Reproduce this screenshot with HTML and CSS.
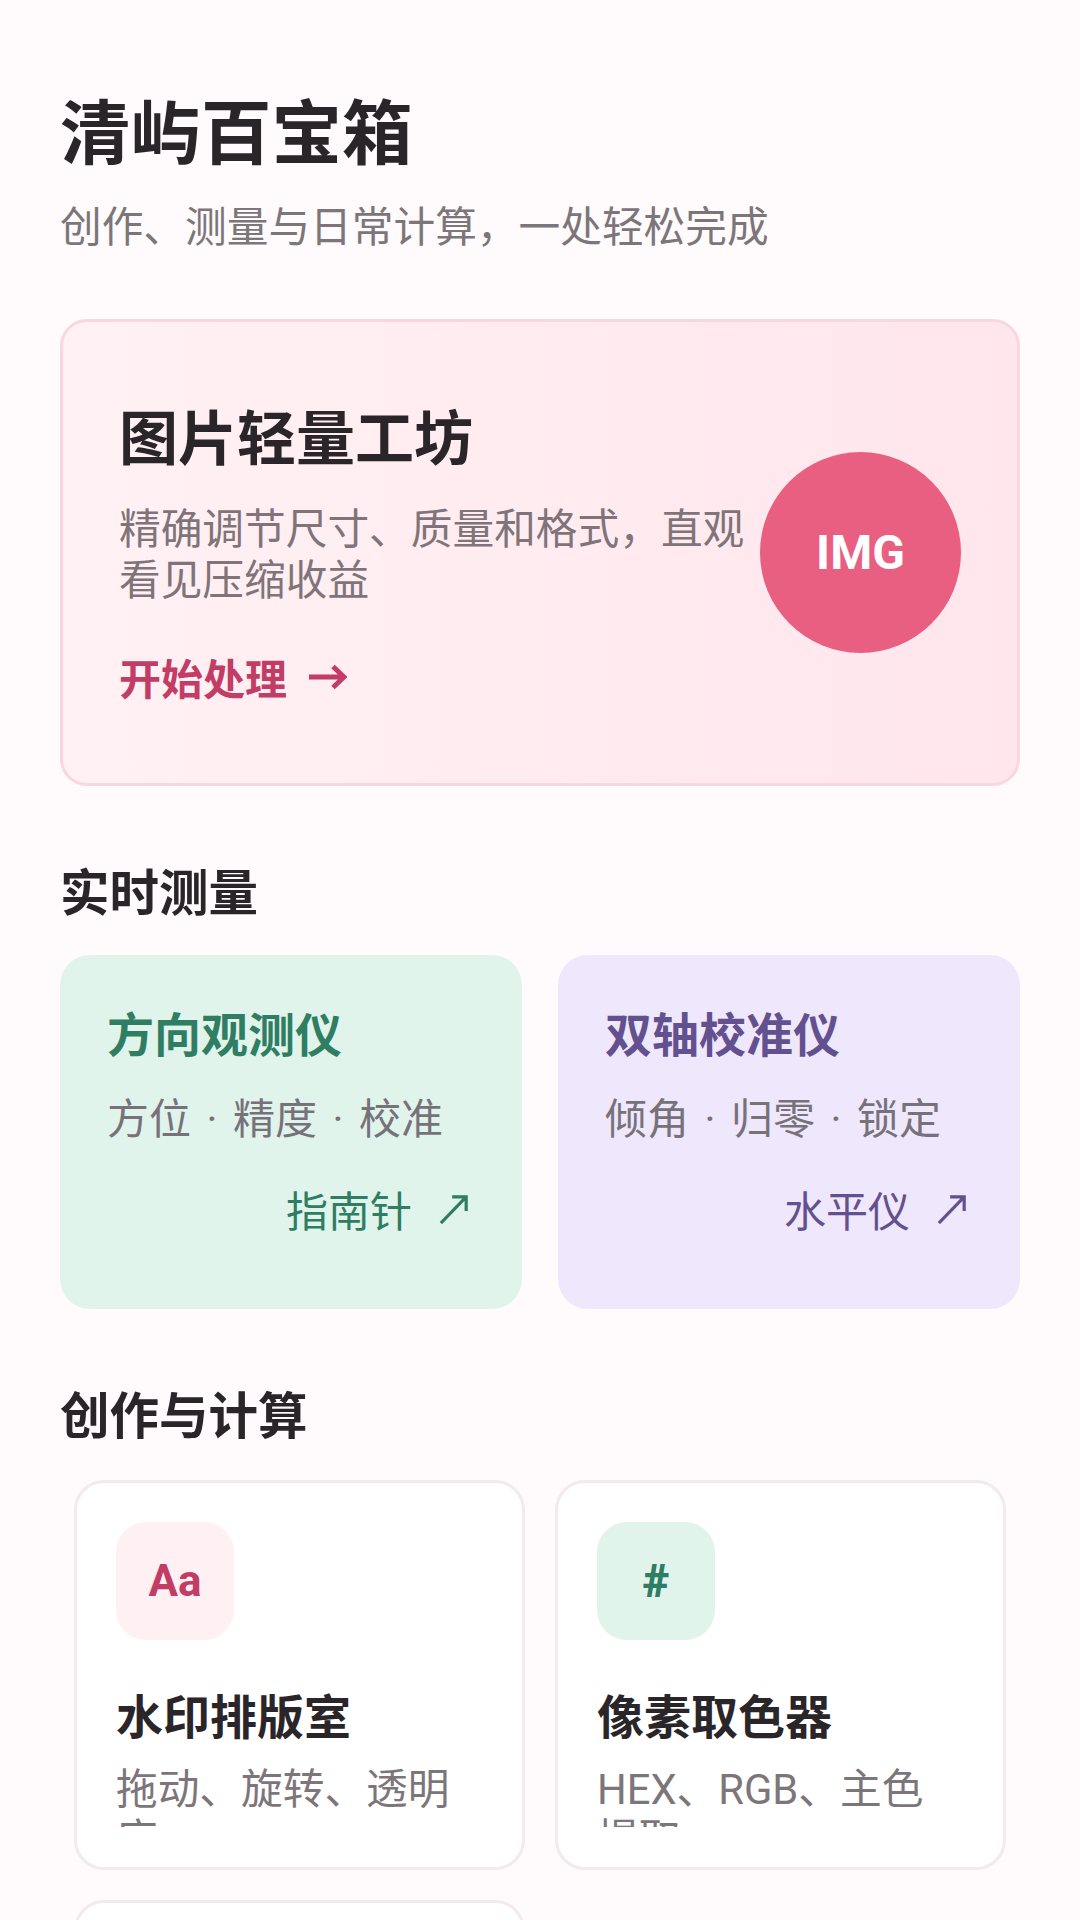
FILE: index.html
```html
<!DOCTYPE html>
<html lang="zh-CN">
<head>
<meta charset="utf-8">
<title>清屿百宝箱</title>
<link rel="stylesheet" href="styles.css">
</head>
<body>
<main class="page">
  <header class="header">
    <h1 class="title">清屿百宝箱</h1>
    <p class="subtitle">创作、测量与日常计算&#xFF0C;一处轻松完成</p>
  </header>

  <section class="hero">
    <div class="hero-text">
      <h2 class="hero-title">图片轻量工坊</h2>
      <p class="hero-desc">精确调节尺寸、质量和格式&#xFF0C;直观看见压缩收益</p>
      <div class="hero-cta">
        <span>开始处理</span>
        <svg class="cta-arrow" viewBox="0 0 38 26" aria-hidden="true"><path d="M0 13H34M24 2.5 35 13 24 23.5" fill="none" stroke="currentColor" stroke-width="5"/></svg>
      </div>
    </div>
    <div class="hero-badge">IMG</div>
  </section>

  <h2 class="section-title section-first">实时测量</h2>
  <div class="measure-grid">
    <article class="measure measure-green">
      <h3 class="measure-title">方向观测仪</h3>
      <p class="measure-sub">方位<span class="dot">·</span>精度<span class="dot">·</span>校准</p>
      <div class="measure-link">
        <span>指南针</span>
        <svg class="link-arrow" viewBox="0 0 32 32" aria-hidden="true"><path d="M2 31 29 3M14 3H29V18" fill="none" stroke="currentColor" stroke-width="3.4"/></svg>
      </div>
    </article>
    <article class="measure measure-purple">
      <h3 class="measure-title">双轴校准仪</h3>
      <p class="measure-sub">倾角<span class="dot">·</span>归零<span class="dot">·</span>锁定</p>
      <div class="measure-link">
        <span>水平仪</span>
        <svg class="link-arrow" viewBox="0 0 32 32" aria-hidden="true"><path d="M2 31 29 3M14 3H29V18" fill="none" stroke="currentColor" stroke-width="3.4"/></svg>
      </div>
    </article>
  </div>

  <h2 class="section-title section-second">创作与计算</h2>
  <div class="tool-grid">
    <article class="tool">
      <div class="tool-icon icon-pink">Aa</div>
      <h3 class="tool-title">水印排版室</h3>
      <p class="tool-desc">拖动、旋转、透明度</p>
    </article>
    <article class="tool">
      <div class="tool-icon icon-green">#</div>
      <h3 class="tool-title">像素取色器</h3>
      <p class="tool-desc">HEX、RGB、主色提取</p>
    </article>
    <article class="tool"></article>
  </div>
</main>
</body>
</html>
```

FILE: styles.css
```css
* { box-sizing: border-box; }
html, body { margin: 0; padding: 0; }
body {
  width: 1080px;
  height: 1920px;
  overflow: hidden;
  background: #fffafb;
  font-family: "Noto Sans CJK SC", "Noto Sans", sans-serif;
  color: #2a2529;
}
h1, h2, h3, p { margin: 0; font-weight: normal; }
.page { padding: 86px 60px 0; }

.title { font-size: 70.5px; line-height: 84px; font-weight: 700; }
.subtitle { margin-top: 24px; font-size: 41.7px; line-height: 60px; color: #7c767a; }

.hero {
  margin-top: 65px;
  height: 467px;
  display: flex;
  align-items: center;
  padding: 0 56px;
  border: 3px solid #f8d7e0;
  border-radius: 27px;
  background: linear-gradient(90deg, #fff1f4, #ffe6ec);
}
.hero-text { flex: 1; min-width: 0; padding-bottom: 4px; }
.hero-title { font-size: 59px; line-height: 72px; font-weight: 700; }
.hero-desc { margin-top: 29.5px; font-size: 41.7px; line-height: 51px; color: #7f7479; width: 640px; }
.hero-cta {
  margin-top: 49.5px;
  display: flex;
  align-items: center;
  gap: 22px;
  font-size: 42px;
  line-height: 50px;
  font-weight: 700;
  color: #c23c66;
}
.cta-arrow { width: 38px; height: 26px; }
.hero-badge {
  flex: none;
  width: 201px;
  height: 201px;
  border-radius: 50%;
  background: #e95f82;
  color: #fff;
  display: flex;
  align-items: center;
  justify-content: center;
  font-family: Roboto, sans-serif;
  font-size: 48px;
  font-weight: 700;
}

.section-title { font-size: 49.5px; line-height: 60px; font-weight: 700; }
.section-first { margin-top: 74px; }
.section-second { margin-top: 74px; }

.measure-grid {
  margin-top: 35px;
  display: grid;
  grid-template-columns: 1fr 1fr;
  gap: 36px;
}
.measure {
  height: 354px;
  padding: 47px 47px 0;
  border-radius: 30px;
}
.measure-green { background: #e0f4ec; color: #2f7d63; }
.measure-purple { background: #efe7fb; color: #63508f; }
.measure-title { font-size: 47px; line-height: 60px; font-weight: 700; }
.measure-sub { margin-top: 24px; font-size: 42px; line-height: 60px; color: #77727a; white-space: nowrap; }
.dot { display: inline-block; width: 42px; text-align: center; font-family: Roboto, sans-serif; }
.measure-link {
  margin-top: 29px;
  padding-right: 6px;
  display: flex;
  justify-content: flex-end;
  align-items: center;
  gap: 27px;
  font-size: 42px;
  line-height: 60px;
}
.link-arrow { width: 30px; height: 30px; }

.tool-grid {
  margin-top: 37px;
  padding: 0 14px;
  display: grid;
  grid-template-columns: 1fr 1fr;
  gap: 30px;
}
.tool {
  height: 390px;
  padding: 39px 39px 0;
  background: #fff;
  border: 3px solid #f3eaed;
  border-radius: 30px;
}
.tool-icon {
  width: 118px;
  height: 118px;
  border-radius: 30px;
  display: flex;
  align-items: center;
  justify-content: center;
  font-family: Roboto, sans-serif;
  font-size: 44px;
  font-weight: 700;
}
.icon-pink { background: #fff0f3; color: #c23c66; }
.icon-green { background: #e0f4ec; color: #2f7d63; font-size: 46px; font-weight: 900; }
.tool-title { margin-top: 44px; font-size: 47px; line-height: 60px; font-weight: 700; }
.tool-desc {
  margin-top: 21px;
  height: 62px;
  overflow: hidden;
  font-family: Roboto, "Noto Sans CJK SC", sans-serif;
  font-size: 41.7px;
  line-height: 50px;
  color: #7c767a;
}
```
